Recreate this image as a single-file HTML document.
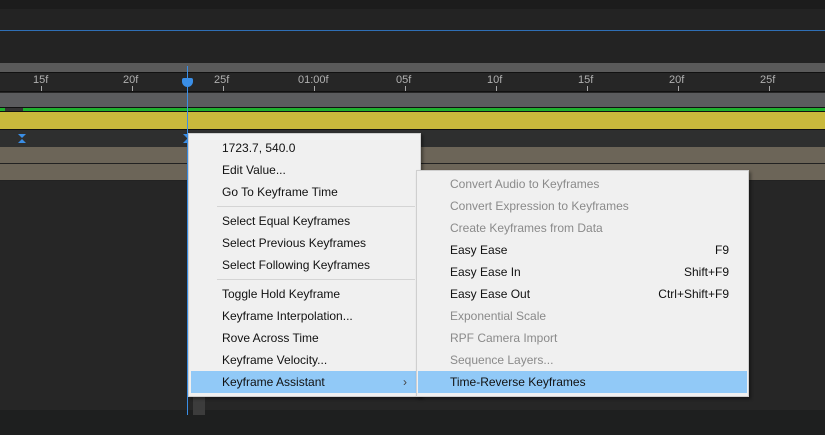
<!DOCTYPE html>
<html><head><style>
*{margin:0;padding:0;box-sizing:border-box}
body{width:825px;height:435px;overflow:hidden;background:#262626;position:relative;font-family:"Liberation Sans",sans-serif}
.a{position:absolute}
.t{position:absolute;font-size:11px;color:#b0b0b0}
.tick{position:absolute;width:1px;height:5px;background:#a8a8a8;top:86px}
.m{position:absolute;background:#f0f0f0;border:1px solid #cfcfcf;box-shadow:2px 2px 3px rgba(0,0,0,.4)}
.i{position:absolute;font-size:12px;color:#111;white-space:nowrap;height:22px;line-height:22px}
.d{color:#8a8a8a}
.sep{position:absolute;height:1px;background:#d4d4d4}
.k{position:absolute;right:0;width:90px;text-align:right}
.kf{position:absolute;width:8px;height:9px}
.kf:before{content:"";position:absolute;left:0;top:0;border-left:4px solid transparent;border-right:4px solid transparent;border-top:4px solid #3a8ee6}
.kf:after{content:"";position:absolute;left:0;top:5px;border-left:4px solid transparent;border-right:4px solid transparent;border-bottom:4px solid #3a8ee6}
</style></head><body>
<div class="a" style="left:0;top:0;width:825px;height:9px;background:#1c1c1c"></div>
<div class="a" style="left:0;top:9px;width:825px;height:54px;background:#232323"></div>
<div class="a" style="left:0;top:30px;width:825px;height:1px;background:#2f6fb5"></div>
<div class="a" style="left:0;top:63px;width:825px;height:9px;background:#5a5a5a"></div>
<div class="a" style="left:0;top:72px;width:825px;height:20px;background:#262626;border-top:1px solid #111;border-bottom:1px solid #111"></div>
<div class="t" style="left:33px;top:74px">15f</div><div class="tick" style="left:41px"></div>
<div class="t" style="left:123px;top:74px">20f</div><div class="tick" style="left:132px"></div>
<div class="t" style="left:214px;top:74px">25f</div><div class="tick" style="left:223px"></div>
<div class="t" style="left:298px;top:74px">01:00f</div><div class="tick" style="left:314px"></div>
<div class="t" style="left:396px;top:74px">05f</div><div class="tick" style="left:405px"></div>
<div class="t" style="left:487px;top:74px">10f</div><div class="tick" style="left:496px"></div>
<div class="t" style="left:578px;top:74px">15f</div><div class="tick" style="left:587px"></div>
<div class="t" style="left:669px;top:74px">20f</div><div class="tick" style="left:678px"></div>
<div class="t" style="left:760px;top:74px">25f</div><div class="tick" style="left:769px"></div>
<div class="a" style="left:0;top:93px;width:825px;height:14px;background:#5b5c5e"></div>
<div class="a" style="left:0;top:107px;width:825px;height:5px;background:#1fb02e;border-top:1px solid #111;border-bottom:1px solid #111"></div>
<div class="a" style="left:5px;top:108px;width:18px;height:3px;background:#333"></div>
<div class="a" style="left:0;top:112px;width:825px;height:17px;background:#c9b93c"></div>
<div class="a" style="left:0;top:129px;width:825px;height:1px;background:#111"></div>
<div class="a" style="left:0;top:130px;width:825px;height:17px;background:#2e2f2f"></div>
<div class="a" style="left:0;top:147px;width:825px;height:16px;background:#6c6558"></div>
<div class="a" style="left:0;top:163px;width:825px;height:1px;background:#222"></div>
<div class="a" style="left:0;top:164px;width:825px;height:16px;background:#6c6558"></div>
<div class="a" style="left:0;top:180px;width:825px;height:1px;background:#222"></div>
<div class="a" style="left:0;top:410px;width:825px;height:25px;background:#1e1f1f"></div>
<div class="a" style="left:193px;top:395px;width:12px;height:20px;background:#3c3c3c"></div>
<div class="kf" style="left:18px;top:134px"></div>
<div class="kf" style="left:183px;top:134px"></div>
<div class="a" style="left:187px;top:66px;width:1px;height:349px;background:#3a8ee6"></div>
<div class="a" style="left:182px;top:78px;width:11px;height:9px;background:#3a8ee6;border-radius:2px 2px 6px 6px"></div>
<div class="m" style="left:188px;top:133px;width:233px;height:264px">
<div class="i" style="left:33px;top:3px">1723.7, 540.0</div>
<div class="i" style="left:33px;top:25px">Edit Value...</div>
<div class="i" style="left:33px;top:47px">Go To Keyframe Time</div>
<div class="sep" style="left:28px;top:72px;width:198px"></div>
<div class="i" style="left:33px;top:76px">Select Equal Keyframes</div>
<div class="i" style="left:33px;top:98px">Select Previous Keyframes</div>
<div class="i" style="left:33px;top:120px">Select Following Keyframes</div>
<div class="sep" style="left:28px;top:145px;width:198px"></div>
<div class="i" style="left:33px;top:149px">Toggle Hold Keyframe</div>
<div class="i" style="left:33px;top:171px">Keyframe Interpolation...</div>
<div class="i" style="left:33px;top:193px">Rove Across Time</div>
<div class="i" style="left:33px;top:215px">Keyframe Velocity...</div>
<div class="a" style="left:2px;top:237px;width:225px;height:22px;background:#91c9f7"></div>
<div class="i" style="left:33px;top:237px">Keyframe Assistant</div>
<div class="i" style="left:214px;top:237px;color:#444">›</div>
</div>
<div class="m" style="left:416px;top:170px;width:333px;height:227px">
<div class="i d" style="left:33px;top:2px">Convert Audio to Keyframes</div>
<div class="i d" style="left:33px;top:24px">Convert Expression to Keyframes</div>
<div class="i d" style="left:33px;top:46px">Create Keyframes from Data</div>
<div class="i" style="left:33px;top:68px;width:279px">Easy Ease<span class="k">F9</span></div>
<div class="i" style="left:33px;top:90px;width:279px">Easy Ease In<span class="k">Shift+F9</span></div>
<div class="i" style="left:33px;top:112px;width:279px">Easy Ease Out<span class="k">Ctrl+Shift+F9</span></div>
<div class="i d" style="left:33px;top:134px">Exponential Scale</div>
<div class="i d" style="left:33px;top:156px">RPF Camera Import</div>
<div class="i d" style="left:33px;top:178px">Sequence Layers...</div>
<div class="a" style="left:1px;top:200px;width:329px;height:22px;background:#91c9f7"></div>
<div class="i" style="left:33px;top:200px">Time-Reverse Keyframes</div>
</div>
</body></html>
